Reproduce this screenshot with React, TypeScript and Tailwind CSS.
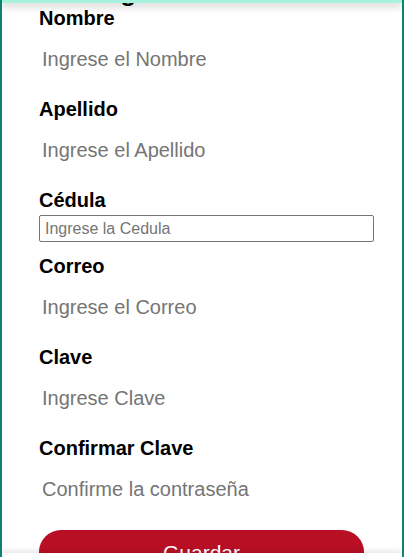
export default function App() {
  const fields = [
    { label: "Nombre", placeholder: "Ingrese el Nombre" },
    { label: "Apellido", placeholder: "Ingrese el Apellido" },
    { label: "Cédula", placeholder: "Ingrese la Cedula", boxed: true },
    { label: "Correo", placeholder: "Ingrese el Correo" },
    { label: "Clave", placeholder: "Ingrese Clave" },
    { label: "Confirmar Clave", placeholder: "Confirme la contraseña" },
  ];

  return (
    <div className="flex h-[557px] w-[404px] flex-col overflow-hidden border-x-2 border-[#0e8074] bg-white font-['Liberation_Sans',Arial,sans-serif]">
      <div className="relative z-10 h-[3px] shrink-0 bg-[#a6f2dc] shadow-[0_3px_7px_rgba(0,0,0,0.3)]" />

      <div className="min-h-0 flex-1 overflow-hidden">
        <form className="flex flex-col pl-[37px] pr-[28px]">
          <h1 className="-mt-[24px] mb-[1px] h-[26px] pl-[48px] text-[26px] font-bold leading-[26px] text-black">
            Registro
          </h1>
          {fields.map((f) =>
            f.boxed ? (
              <div key={f.label} className="flex flex-col pb-[12px]">
                <label className="h-[24px] text-[20px] font-bold leading-[24px] text-black">
                  {f.label}
                </label>
                <input
                  placeholder={f.placeholder}
                  className="mt-[3px] h-[27px] w-[335px] rounded-[2px] border border-[#767676] px-[5px] text-[16px] outline-none placeholder:text-[#757575]"
                />
              </div>
            ) : (
              <div key={f.label} className="flex flex-col pb-[18px]">
                <label className="h-[24px] text-[20px] font-bold leading-[24px] text-black">
                  {f.label}
                </label>
                <input
                  placeholder={f.placeholder}
                  className="mt-[9px] h-[40px] w-[335px] px-[3px] text-[20px] outline-none placeholder:text-[#757575]"
                />
              </div>
            )
          )}
          <button
            type="button"
            className="mt-[3px] h-[46px] w-[325px] shrink-0 rounded-[22px] bg-[#b80f25] text-[21px] text-white"
          >
            Guardar
          </button>
        </form>
      </div>

      <div className="relative z-10 h-[4px] shrink-0 bg-white shadow-[0_-2px_5px_rgba(0,0,0,0.12)]" />
    </div>
  );
}
